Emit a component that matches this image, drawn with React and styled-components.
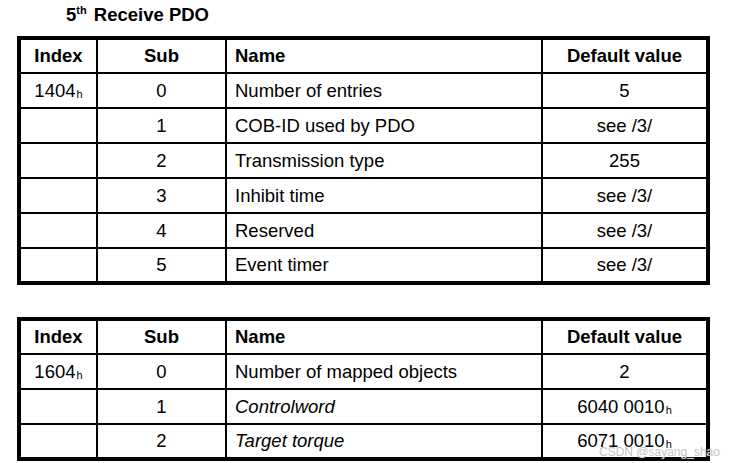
import React from "react"
import styled, { createGlobalStyle } from "styled-components"

const GlobalStyle = createGlobalStyle`
  html, body {
    margin: 0;
    padding: 0;
    background: #ffffff;
  }
  body {
    font-family: "Liberation Sans", Arial, sans-serif;
    color: #000000;
  }
`

const Page = styled.div`
  position: relative;
  width: 733px;
  height: 463px;
  padding: 0 0 0 17px;
  box-sizing: border-box;
  overflow: hidden;
`

const Title = styled.h2`
  margin: 0;
  padding: 4px 0 0 49px;
  height: 36px;
  box-sizing: border-box;
  font-size: 18.5px;
  line-height: 22px;
  font-weight: 700;

  sup {
    font-size: 11px;
    vertical-align: 7px;
    line-height: 0;
    margin-right: 2px;
  }
`

const Table = styled.table`
  border-collapse: collapse;
  border: 4px solid #000;
  width: 689px;
  table-layout: fixed;
  font-size: 18.5px;
  margin-bottom: ${(p) => p.$gap || 0}px;

  td,
  th {
    border: 2px solid #000;
    padding: 0;
    height: 35px;
    box-sizing: border-box;
    white-space: nowrap;
  }

  th {
    font-weight: 700;
  }
`

const Cell = styled.td`
  text-align: ${(p) => p.$align || "center"};
  padding-left: ${(p) => (p.$align === "left" ? "8px" : "0")} !important;
  font-style: ${(p) => (p.$italic ? "italic" : "normal")};
`

const Head = styled.th`
  text-align: ${(p) => p.$align || "center"};
  padding-left: ${(p) => (p.$align === "left" ? "8px" : "0")} !important;
`

const Hex = styled.sub`
  font-size: 11px;
  vertical-align: -1px;
  line-height: 0;
  margin-left: 1px;
`

const Watermark = styled.div`
  position: absolute;
  left: 599px;
  top: 445px;
  font-family: "Liberation Sans", Arial, sans-serif;
  font-size: 12px;
  color: #c4c4c4;
  text-shadow: 0 0 1px #ffffff;
  white-space: nowrap;
`

const Cols = () => (
  <colgroup>
    <col style={{ width: 78 }} />
    <col style={{ width: 129 }} />
    <col style={{ width: 316 }} />
    <col style={{ width: 166 }} />
  </colgroup>
)

const HeaderRow = () => (
  <tr>
    <Head>Index</Head>
    <Head>Sub</Head>
    <Head $align="left">Name</Head>
    <Head>Default value</Head>
  </tr>
)

const receiveRows = [
  ["0", "Number of entries", "5"],
  ["1", "COB-ID used by PDO", "see /3/"],
  ["2", "Transmission type", "255"],
  ["3", "Inhibit time", "see /3/"],
  ["4", "Reserved", "see /3/"],
  ["5", "Event timer", "see /3/"],
]

const mappingRows = [
  { sub: "0", name: "Number of mapped objects", value: "2" },
  { sub: "1", name: "Controlword", value: "6040 0010", hex: true, italic: true },
  { sub: "2", name: "Target torque", value: "6071 0010", hex: true, italic: true },
]

const App = () => (
  <>
    <GlobalStyle />
    <Page>
      <Title>
        5<sup>th</sup> Receive PDO
      </Title>
      <Table $gap={32}>
        <Cols />
        <tbody>
          <HeaderRow />
          {receiveRows.map(([sub, name, value], i) => (
            <tr key={sub}>
              <Cell>
                {i === 0 && (
                  <>
                    1404<Hex>h</Hex>
                  </>
                )}
              </Cell>
              <Cell>{sub}</Cell>
              <Cell $align="left">{name}</Cell>
              <Cell>{value}</Cell>
            </tr>
          ))}
        </tbody>
      </Table>
      <Table>
        <Cols />
        <tbody>
          <HeaderRow />
          {mappingRows.map((row, i) => (
            <tr key={row.sub}>
              <Cell>
                {i === 0 && (
                  <>
                    1604<Hex>h</Hex>
                  </>
                )}
              </Cell>
              <Cell>{row.sub}</Cell>
              <Cell $align="left" $italic={row.italic}>
                {row.name}
              </Cell>
              <Cell>
                {row.value}
                {row.hex && <Hex>h</Hex>}
              </Cell>
            </tr>
          ))}
        </tbody>
      </Table>
      <Watermark>CSDN @sayang_shao</Watermark>
    </Page>
  </>
)

export default App
